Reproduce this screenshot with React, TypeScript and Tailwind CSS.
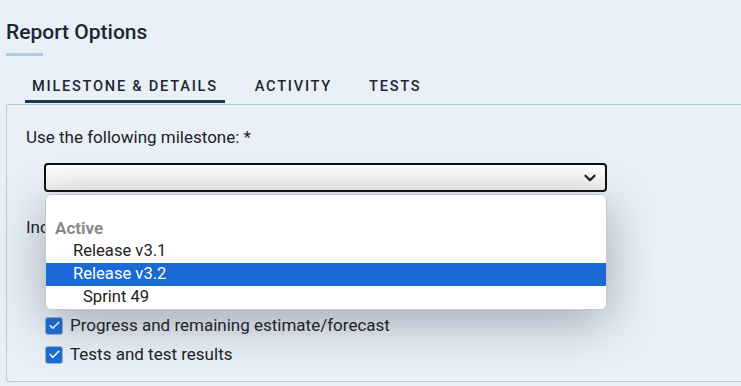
import { Check, ChevronDown } from "lucide-react";

const font = { fontFamily: "Roboto, 'Liberation Sans', sans-serif" };

const tabs = ["MILESTONE & DETAILS", "ACTIVITY", "TESTS"];

function Checkbox({ label }: { label: string }) {
  return (
    <label className="flex items-center gap-[7px] h-[29px]">
      <span className="flex items-center justify-center w-[18px] h-[18px] rounded-[3px] bg-[#1a6fd8] border border-[#9fb3c8]">
        <Check className="w-[13px] h-[13px] text-white" strokeWidth={3} />
      </span>
      <span className="text-[17px] text-[#222]">{label}</span>
    </label>
  );
}

export default function App() {
  return (
    <div
      className="relative w-[741px] h-[386px] overflow-hidden bg-[#e9f0f8] pl-[6px] pt-[20px]"
      style={font}
    >
      {/* Heading */}
      <h1 className="text-[21px] font-medium text-[#1d2733] leading-[24px]">
        Report Options
      </h1>
      <div className="mt-[9px] w-[37px] h-[3px] bg-[#aecbe1]" />

      {/* Tabs */}
      <div className="flex gap-[23px] ml-[19px] mt-[20px]">
        {tabs.map((t, i) => (
          <div
            key={t}
            className={
              "px-[7px] pb-[4px] text-[14.6px] leading-[20px] font-medium tracking-[0.12em] text-[#1d2733] border-b-[3px] " +
              (i === 0 ? "border-[#1e3a4f]" : "border-transparent")
            }
          >
            {t}
          </div>
        ))}
      </div>

      {/* Panel */}
      <div className="mr-[-20px] mt-[1px] h-[278px] border border-[#b3cfe4] rounded-bl-[3px] pl-[19px] pt-[21px]">
        <div className="text-[17px] text-[#222] leading-[22px]">
          Use the following milestone: *
        </div>
        <div className="ml-[18px] mt-[15px] w-[563px] h-[29px] rounded-[4px] border-2 border-[#111] bg-gradient-to-b from-white to-[#efefef] flex items-center justify-end pr-[6px]">
          <ChevronDown className="w-[18px] h-[18px] text-[#222]" strokeWidth={3.2} />
        </div>
        <div className="mt-[24px] text-[17px] text-[#222] leading-[22px]">
          Include the following:
        </div>
        <div className="ml-[19px] mt-[73px] flex flex-col">
          <Checkbox label="Progress and remaining estimate/forecast" />
          <Checkbox label="Tests and test results" />
        </div>
      </div>

      {/* Open dropdown list */}
      <div className="absolute left-[45px] top-[194px] w-[562px] h-[116px] bg-white rounded-[6px] border border-[#c8c8c8] shadow-[0_12px_50px_rgba(40,50,70,0.38)] overflow-hidden text-[16.6px] text-[#222]">
        <div className="h-[22px]" />
        <div className="h-[23px] pl-[9px] flex items-center font-bold text-[17px] text-[#8a8a8a]">
          Active
        </div>
        <div className="h-[23px] pl-[27px] flex items-center">Release v3.1</div>
        <div className="h-[23px] pl-[27px] flex items-center bg-[#1a69d4] text-white">
          Release v3.2
        </div>
        <div className="h-[23px] pl-[37px] flex items-center">Sprint 49</div>
      </div>
    </div>
  );
}
